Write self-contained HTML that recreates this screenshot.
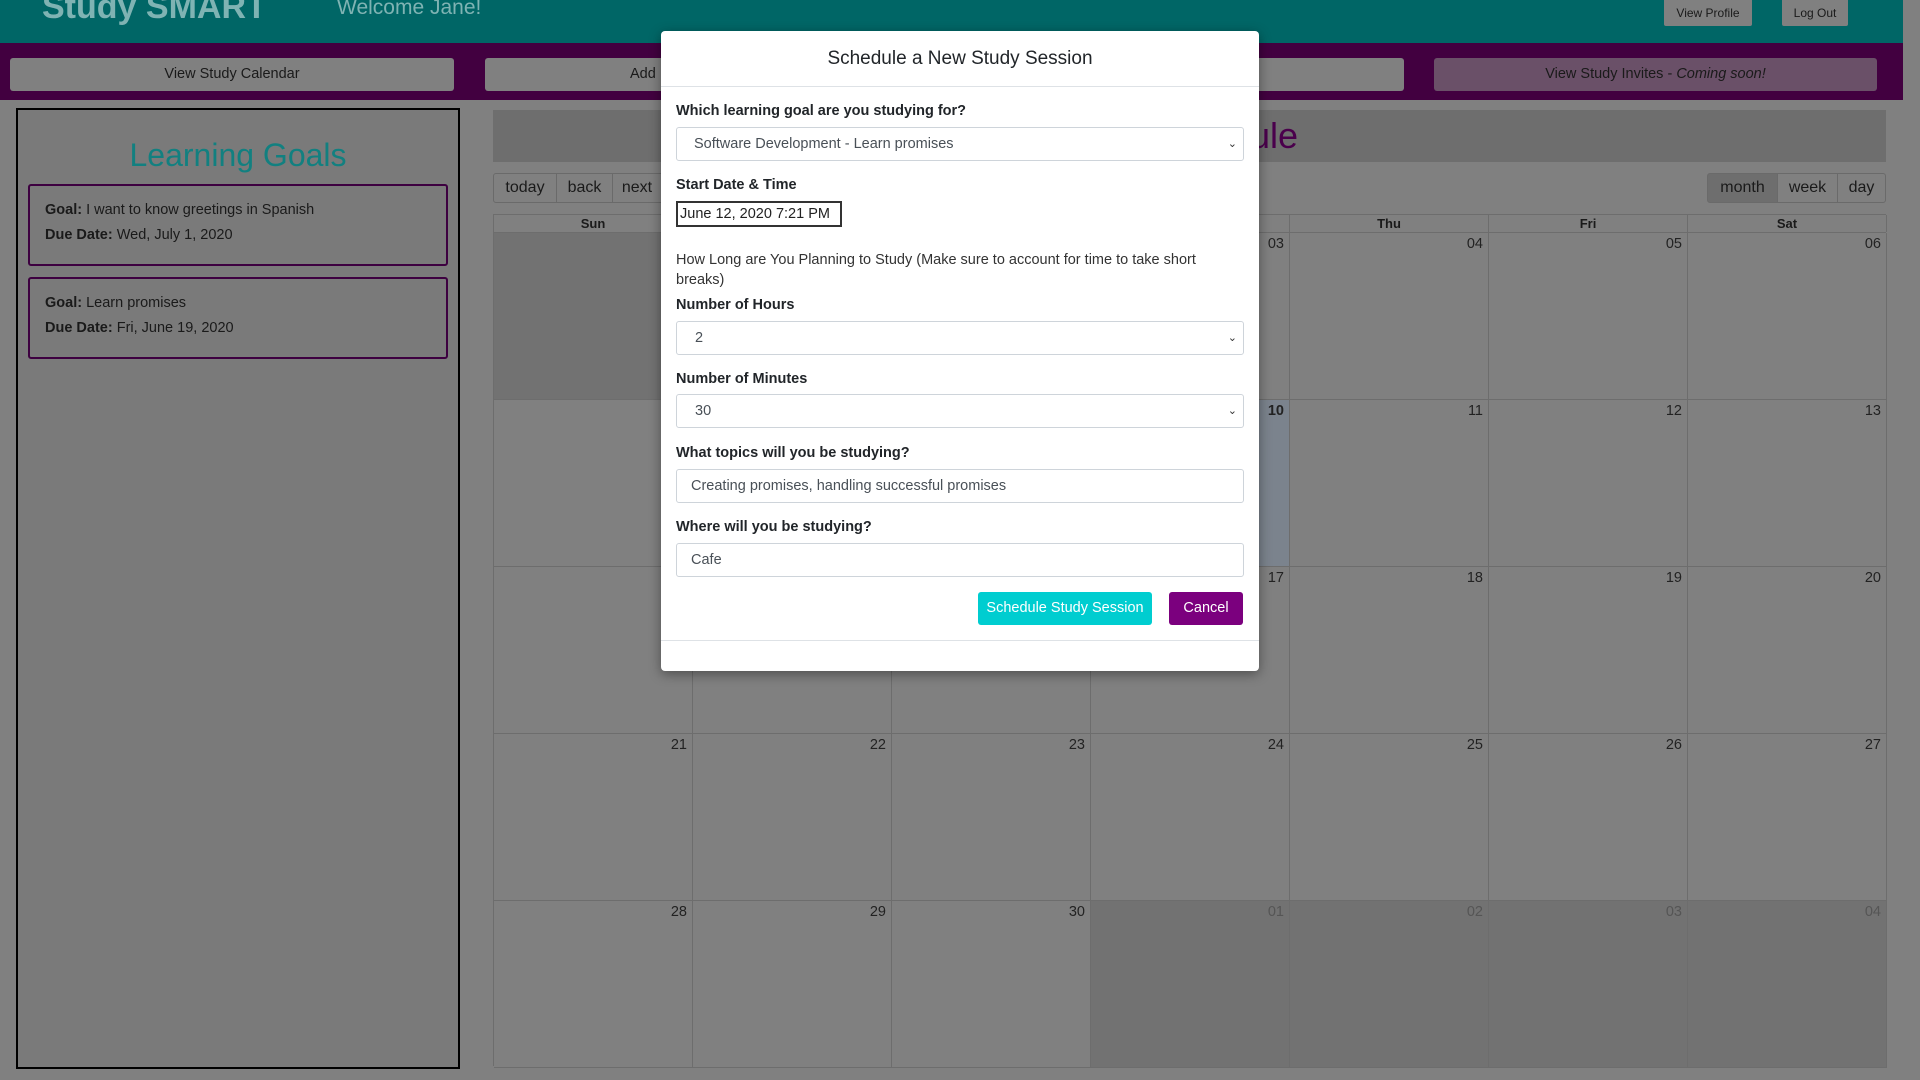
<!DOCTYPE html>
<html><head><meta charset="utf-8"><style>
*{box-sizing:border-box;margin:0;padding:0}
body{width:1920px;height:1080px;overflow:hidden;background:#808080;font-family:"Liberation Sans",sans-serif;position:relative;color:#1a1a1a}
.a{position:absolute}
.hdr{left:0;top:0;width:1903px;height:43px;background:#006666}
.nav{left:0;top:43px;width:1903px;height:57px;background:#420040}
.nb{top:58px;height:33px;background:#808080;border-radius:3px;text-align:center;line-height:33px;font-size:14.5px;color:#1a1a1a}
.sb{top:0;height:26px;background:#808080;font-size:12px;line-height:26px;text-align:center;border-radius:0 0 2px 2px}
.panel{left:16px;top:108px;width:444px;height:961px;border:2px solid #000;background:#7a7a7a}
.card{left:28px;width:420px;border:2px solid #3d0040;border-radius:3px;font-size:14.5px;padding:12px 15px;line-height:25px;height:82px}
.cell{border-right:1px solid #6d6d6d;border-bottom:1px solid #6d6d6d;width:199px;height:167px;text-align:right;padding:3px 5px;font-size:14.5px;color:#222}
.off{background:#727272;color:#555}
.tb{top:173px;height:30px;border:1px solid #6a6a6a;font-size:16px;line-height:28px;text-align:center;color:#1a1a1a}
.modal{left:661px;top:31px;width:598px;height:640px;background:#fff;border-radius:4px;box-shadow:0 3px 12px rgba(0,0,0,.4)}
.m{position:absolute;color:#212529}
.lbl{left:15px;font-size:14.5px;font-weight:bold;color:#212529}
.inp{left:15px;width:568px;height:34px;border:1px solid #ced4da;border-radius:3px;font-size:14.5px;line-height:32px;padding-left:14px;color:#495057}
.chev{position:absolute;right:6px;top:0;font-size:11px;color:#333}
</style></head><body>
<div class="a hdr"></div>
<div class="a" style="left:42px;top:-12px;font-size:34px;font-weight:bold;color:#7fb3b3">Study SMART</div>
<div class="a" style="left:337px;top:-4px;font-size:21px;color:#7fb3b3">Welcome Jane!</div>
<div class="a sb" style="left:1664px;width:88px">View Profile</div>
<div class="a sb" style="left:1782px;width:66px">Log Out</div>
<div class="a nav"></div>
<div class="a nb" style="left:10px;width:444px">View Study Calendar</div>
<div class="a nb" style="left:485px;width:444px"><span style="position:absolute;left:145px">Add</span></div>
<div class="a nb" style="left:960px;width:444px"></div>
<div class="a nb" style="left:1434px;width:443px;background:#6a5068">View Study Invites - <i>Coming soon!</i></div>

<div class="a panel"></div>
<div class="a" style="left:16px;width:444px;top:137px;text-align:center;font-size:32px;color:#128080">Learning Goals</div>
<div class="a card" style="top:184px"><b>Goal:</b> I want to know greetings in Spanish<br><b>Due Date:</b> Wed, July 1, 2020</div>
<div class="a card" style="top:277px"><b>Goal:</b> Learn promises<br><b>Due Date:</b> Fri, June 19, 2020</div>

<div class="a" style="left:493px;top:110px;width:1393px;height:52px;background:#6e6e6e"></div>
<div class="a" style="left:1250px;top:110px;font-size:36px;line-height:52px;color:#4a004c">ule</div>
<div class="a tb" style="left:493px;width:64px;border-radius:3px 0 0 3px">today</div>
<div class="a tb" style="left:556px;width:57px">back</div>
<div class="a tb" style="left:612px;width:50px">next</div>
<div class="a tb" style="left:1707px;width:71px;background:#6e6e6e;border-radius:3px 0 0 3px">month</div>
<div class="a tb" style="left:1777px;width:61px">week</div>
<div class="a tb" style="left:1837px;width:49px;border-radius:0 3px 3px 0">day</div>

<div class="a" style="left:493px;top:214px;width:1393px;height:852px;border-left:1px solid #6d6d6d;border-top:1px solid #6d6d6d">
<div style="display:grid;grid-template-columns:repeat(7,199px);height:18px;border-bottom:1px solid #6d6d6d;font-size:13px;font-weight:bold;text-align:center;line-height:17px">
<div style="border-right:1px solid #6d6d6d">Sun</div><div style="border-right:1px solid #6d6d6d">Mon</div><div style="border-right:1px solid #6d6d6d">Tue</div><div style="border-right:1px solid #6d6d6d">Wed</div><div style="border-right:1px solid #6d6d6d">Thu</div><div style="border-right:1px solid #6d6d6d">Fri</div><div style="border-right:1px solid #6d6d6d">Sat</div></div>
<div style="display:grid;grid-template-columns:repeat(7,199px)">
<div class="cell off">31</div><div class="cell">01</div><div class="cell">02</div><div class="cell">03</div><div class="cell">04</div><div class="cell">05</div><div class="cell">06</div>
<div class="cell">07</div><div class="cell">08</div><div class="cell">09</div><div class="cell" style="background:#7b838d;font-weight:bold">10</div><div class="cell">11</div><div class="cell">12</div><div class="cell">13</div>
<div class="cell">14</div><div class="cell">15</div><div class="cell">16</div><div class="cell">17</div><div class="cell">18</div><div class="cell">19</div><div class="cell">20</div>
<div class="cell">21</div><div class="cell">22</div><div class="cell">23</div><div class="cell">24</div><div class="cell">25</div><div class="cell">26</div><div class="cell">27</div>
<div class="cell">28</div><div class="cell">29</div><div class="cell">30</div><div class="cell off">01</div><div class="cell off">02</div><div class="cell off">03</div><div class="cell off">04</div>
</div></div>

<div class="a modal">
<div class="m" style="left:0;width:598px;top:17px;text-align:center;font-size:19px">Schedule a New Study Session</div>
<div class="m" style="left:0;top:55px;width:598px;border-top:1px solid #dee2e6"></div>
<div class="m lbl" style="top:72px">Which learning goal are you studying for?</div>
<div class="m inp" style="top:96px;padding-left:17px">Software Development - Learn promises<span class="chev">&#8964;</span></div>
<div class="m lbl" style="top:146px">Start Date &amp; Time</div>
<div class="m" style="left:15px;top:170px;width:166px;height:26px;border:2px solid #333;font-size:14.5px;line-height:22px;padding-left:2px;color:#222">June 12, 2020 7:21 PM</div>
<div class="m" style="left:15px;top:219px;width:570px;font-size:14.5px;line-height:20px;color:#333">How Long are You Planning to Study (Make sure to account for time to take short breaks)</div>
<div class="m lbl" style="top:266px">Number of Hours</div>
<div class="m inp" style="top:290px;padding-left:18px">2<span class="chev">&#8964;</span></div>
<div class="m lbl" style="top:340px">Number of Minutes</div>
<div class="m inp" style="top:363px;padding-left:18px">30<span class="chev">&#8964;</span></div>
<div class="m lbl" style="top:414px">What topics will you be studying?</div>
<div class="m inp" style="top:438px">Creating promises, handling successful promises</div>
<div class="m lbl" style="top:488px">Where will you be studying?</div>
<div class="m inp" style="top:512px">Cafe</div>
<div class="m" style="left:317px;top:561px;width:174px;height:33px;background:#00cdd0;border-radius:3px;color:#fff;font-size:14.5px;text-align:center;line-height:33px">Schedule Study Session</div>
<div class="m" style="left:508px;top:561px;width:74px;height:33px;background:#7b007e;border-radius:3px;color:#fff;font-size:14.5px;text-align:center;line-height:33px">Cancel</div>
<div class="m" style="left:0;top:609px;width:598px;border-top:1px solid #dee2e6"></div>
</div>
</body></html>
